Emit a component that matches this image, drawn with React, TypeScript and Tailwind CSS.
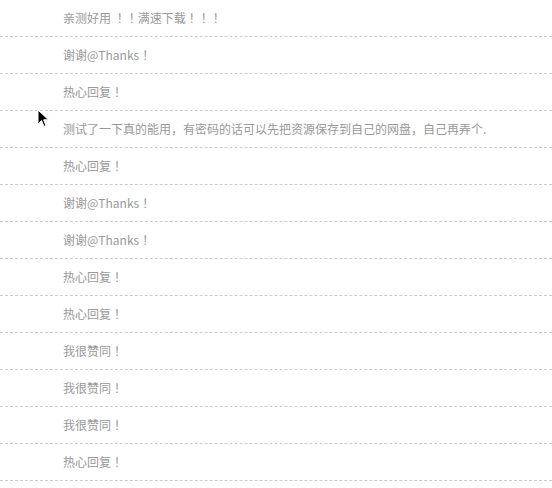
const comments = [
  '亲测好用 ！！满速下载！！！',
  '谢谢@Thanks！',
  '热心回复！',
  '测试了一下真的能用，有密码的话可以先把资源保存到自己的网盘，自己再弄个.',
  '热心回复！',
  '谢谢@Thanks！',
  '谢谢@Thanks！',
  '热心回复！',
  '热心回复！',
  '我很赞同！',
  '我很赞同！',
  '我很赞同！',
  '热心回复！',
];

// full-width "！" rendered centred in its box, like the reference font does
const renderText = (text: string) =>
  text.split(/(！)/).map((part, i) =>
    part === '！' ? (
      <span key={i} className="font-['Noto_Sans_CJK_JP',sans-serif]">
        {part}
      </span>
    ) : (
      part
    )
  );

export default function App() {
  return (
    <div className="relative w-[552px] h-[488px] bg-white overflow-hidden font-['Microsoft_YaHei','Noto_Sans_CJK_SC',sans-serif] [text-spacing-trim:space-all]">
      <ul>
        {comments.map((text, i) => (
          <li
            key={i}
            className="h-[37px] flex items-center pl-[63px] border-b border-dashed border-[#cccccc] text-[12px] text-[#999999] whitespace-pre"
          >
            <span>{renderText(text)}</span>
          </li>
        ))}
      </ul>

      {/* mouse pointer */}
      <svg
        className="absolute left-[37px] top-[109px]"
        width="13"
        height="19"
        viewBox="0 0 13 19"
      >
        <path
          d="M1 1 L1 15 L4.5 11.5 L7 17.5 L9 16.6 L6.6 10.8 L11.5 10.8 Z"
          fill="#000"
          stroke="#fff"
          strokeWidth="1"
          strokeLinejoin="round"
        />
      </svg>
    </div>
  );
}
